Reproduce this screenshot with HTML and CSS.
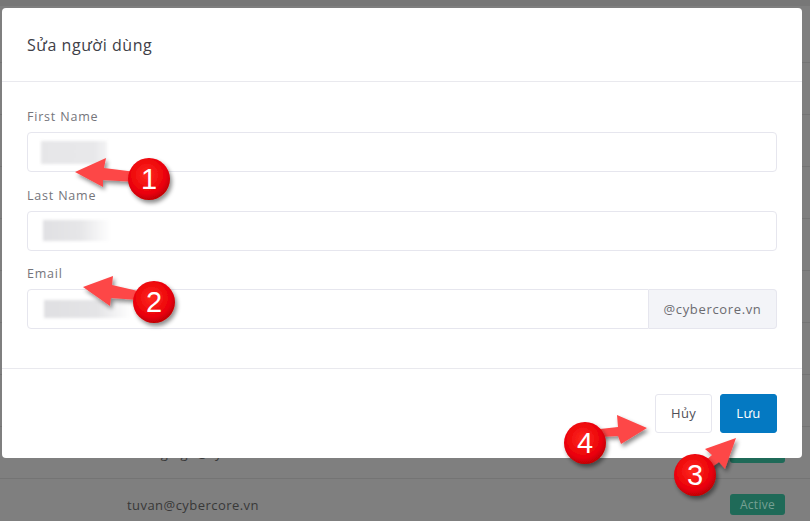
FILE: index.html
```html
<!DOCTYPE html>
<html lang="vi">
<head>
<meta charset="utf-8">
<title>Sửa người dùng</title>
<link rel="stylesheet" href="styles.css">
</head>
<body>
<div class="page">
  <div class="page-top"></div>
  <div class="table">
    <div class="row"><span class="cell-email">admin@cybercore.vn</span><span class="badge">Active</span></div>
    <div class="row"><span class="cell-email">hoang@cybercore.vn</span><span class="badge">Active</span></div>
    <div class="row"><span class="cell-email">minh@cybercore.vn</span><span class="badge">Active</span></div>
    <div class="row"><span class="cell-email">lan@cybercore.vn</span><span class="badge">Active</span></div>
    <div class="row"><span class="cell-email">quang@cybercore.vn</span><span class="badge">Active</span></div>
    <div class="row"><span class="cell-email">thu@cybercore.vn</span><span class="badge">Active</span></div>
    <div class="row"><span class="cell-email">phuong@cybercore.vn</span><span class="badge">Active</span></div>
    <div class="row"><span class="cell-email">nhung.ngo@cybercore.vn</span><span class="badge">Active</span></div>
    <div class="row"><span class="cell-email">tuvan@cybercore.vn</span><span class="badge">Active</span></div>
  </div>
</div>

<div class="modal">
  <div class="modal-header">
    <h2 class="modal-title">Sửa người dùng</h2>
  </div>
  <div class="modal-body">
    <div class="field">
      <label class="label">First Name</label>
      <div class="input"><span class="blur blur-1"></span></div>
    </div>
    <div class="field">
      <label class="label">Last Name</label>
      <div class="input"><span class="blur blur-2"></span></div>
    </div>
    <div class="field">
      <label class="label">Email</label>
      <div class="input-group">
        <div class="input input-grow"><span class="blur blur-3"></span></div>
        <span class="addon">@cybercore.vn</span>
      </div>
    </div>
  </div>
  <div class="modal-footer">
    <button class="btn btn-light">Hủy</button>
    <button class="btn btn-primary">Lưu</button>
  </div>
</div>

<svg class="annotations" width="810" height="521" viewBox="0 0 810 521">
  <defs>
    <filter id="sh" x="-30%" y="-30%" width="160%" height="160%">
      <feDropShadow dx="2" dy="3" stdDeviation="2" flood-color="#000" flood-opacity="0.45"/>
    </filter>
    <radialGradient id="ball" cx="45%" cy="40%" r="60%">
      <stop offset="0" stop-color="#ff2a1f"/>
      <stop offset="0.75" stop-color="#ea0008"/>
      <stop offset="1" stop-color="#c00006"/>
    </radialGradient>
  </defs>
  <g filter="url(#sh)" fill="#fd4747">
    <polygon points="75,172 106,158 104,168 136,172 136,182 103,180 103,187"/>
    <polygon points="83,287 113,276 112,285 138,291 138,300 111,298 110,306"/>
    <polygon points="647,428 617,415 618,427 600,429 600,437 618,436 621,444"/>
    <polygon points="736,438 705,449 712,455 698,467 704,473 719,462 725,469"/>
  </g>
  <g filter="url(#sh)">
    <circle cx="149" cy="179" r="21" fill="url(#ball)"/>
    <circle cx="154" cy="302" r="21" fill="url(#ball)"/>
    <circle cx="695" cy="475" r="21" fill="url(#ball)"/>
    <circle cx="585" cy="443" r="21" fill="url(#ball)"/>
  </g>
  <g class="num" fill="#fff" text-anchor="middle">
    <text x="149" y="189">1</text>
    <text x="154" y="312">2</text>
    <text x="695" y="485">3</text>
    <text x="585" y="453">4</text>
  </g>
</svg>
</body>
</html>
```

FILE: styles.css
```css
* { box-sizing: border-box; }

html, body {
  margin: 0;
  padding: 0;
}

body {
  width: 810px;
  height: 521px;
  overflow: hidden;
  background: #7f7f7f;
  font-family: "Open Sans", "Noto Sans", sans-serif;
  position: relative;
}

/* background page (dimmed by backdrop) */
.page {
  width: 810px;
}

.page-top {
  height: 62px;
  border-top: 6px solid #777;
}

.table {
  display: flex;
  flex-direction: column;
  background: #787878;
}

.row {
  height: 52px;
  display: flex;
  align-items: center;
  justify-content: space-between;
  padding: 0 25px 0 127px;
  border-top: 1px solid #747474;
  background: #7f7f7f;
}

.cell-email {
  font-size: 13px;
  letter-spacing: 0.45px;
  color: #383838;
}

.badge {
  width: 55px;
  height: 21px;
  display: flex;
  align-items: center;
  justify-content: center;
  background: #1f6a58;
  color: #76a093;
  font-size: 12px;
  letter-spacing: 0.3px;
  border-radius: 3px;
}

/* modal */
.modal {
  position: absolute;
  left: 2px;
  top: 8px;
  width: 800px;
  height: 450px;
  background: #fff;
  border-radius: 4px;
  display: flex;
  flex-direction: column;
}

.modal-header {
  height: 74px;
  padding: 0 25px;
  display: flex;
  align-items: center;
  border-bottom: 1px solid #e9e9ee;
}

.modal-title {
  margin: 0;
  font-size: 16px;
  font-weight: 400;
  letter-spacing: 0.55px;
  color: #404047;
}

.modal-body {
  padding: 27px 25px 23px;
  border-bottom: 1px solid #e9e9ee;
}

.field {
  display: flex;
  flex-direction: column;
  gap: 7px;
  margin-bottom: 15.5px;
}

.label {
  font-size: 12.5px;
  line-height: 16px;
  letter-spacing: 0.8px;
  color: #75757b;
}

.input {
  height: 40px;
  border: 1px solid #e6e6ee;
  border-radius: 4px;
  background: #fff;
  display: flex;
  align-items: center;
  padding-left: 13px;
}

.input-group {
  display: flex;
}

.input-grow {
  flex: 1;
  border-radius: 4px 0 0 4px;
}

.addon {
  width: 128px;
  height: 40px;
  display: flex;
  align-items: center;
  justify-content: center;
  background: #f3f4f8;
  border: 1px solid #e6e6ee;
  border-left: none;
  border-radius: 0 4px 4px 0;
  font-size: 13px;
  letter-spacing: 0.65px;
  color: #6b6b70;
}

.blur {
  display: block;
  filter: blur(1.5px);
}

.blur-1 {
  width: 66px;
  height: 23px;
  background: linear-gradient(90deg, #e6e6e8 0%, #e8e8ea 80%, #f3f3f4 100%);
}

.blur-2 {
  width: 68px;
  height: 21px;
  margin-left: 2px;
  background: linear-gradient(90deg, #e0e0e3 0%, #e6e6e8 55%, #ffffff 100%);
}

.blur-3 {
  width: 88px;
  height: 18px;
  margin-left: 3px;
  background: linear-gradient(90deg, #dfdfe2 0%, #e4e4e6 60%, #ffffff 100%);
}

.modal-footer {
  flex: 1;
  display: flex;
  justify-content: flex-end;
  align-items: flex-start;
  gap: 8px;
  padding: 25px 25px 0;
}

.btn {
  width: 57px;
  height: 39px;
  border-radius: 3px;
  font-family: "Open Sans", "Noto Sans", sans-serif;
  font-size: 13px;
  letter-spacing: 0.3px;
  cursor: pointer;
}

.btn-light {
  background: #fff;
  border: 1px solid #e6e6ee;
  color: #505058;
}

.btn-primary {
  background: #0479c2;
  border: 1px solid #0479c2;
  color: #fff;
}

/* annotations overlay */
.annotations {
  position: absolute;
  left: 0;
  top: 0;
}

.num text {
  font-family: "Liberation Sans", Arial, sans-serif;
  font-size: 29px;
}
```
